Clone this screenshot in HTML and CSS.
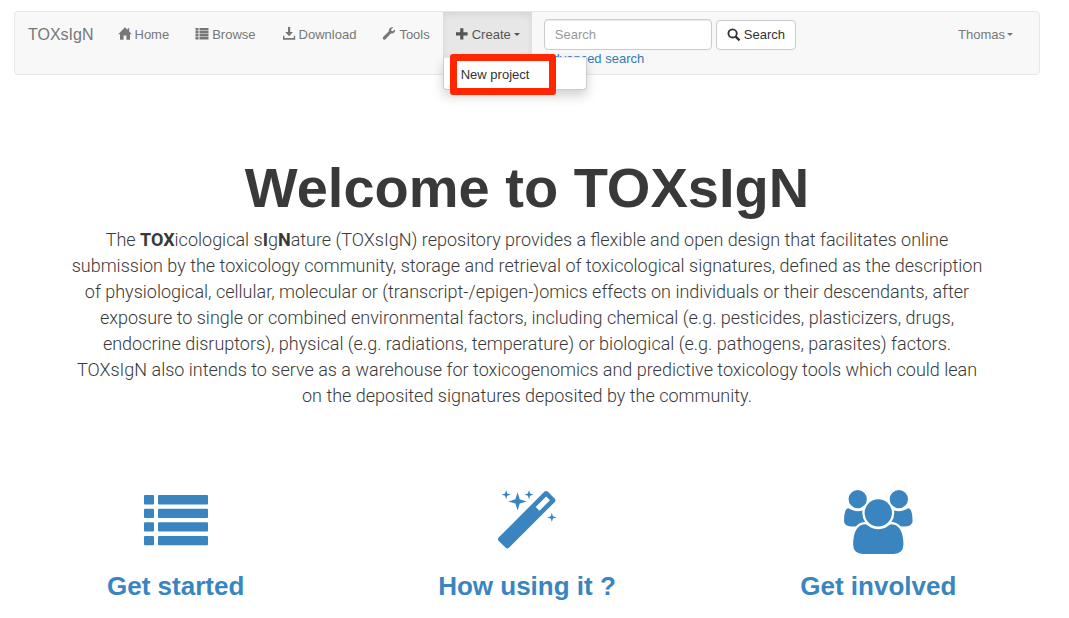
FILE: index.html
```html
<!DOCTYPE html>
<html lang="en">
<head>
<meta charset="utf-8">
<title>TOXsIgN</title>
<link rel="stylesheet" href="styles.css">
</head>
<body>
<header class="navbar">
  <a class="brand" href="#">TOXsIgN</a>
  <nav class="nav">
    <a class="nav-link" href="#"><svg class="icon" viewBox="0 0 14 14"><path d="M7 0.3 0.2 7.2H2V12.8H5.6V8.6H8.4V12.8H12V7.2H13.8L11.2 4.6V1.2H9.6V3Z"/></svg>Home</a>
    <a class="nav-link" href="#"><svg class="icon" viewBox="0 0 14 14"><path d="M0.5 1h3v2.4h-3zM4.5 1h9v2.4h-9zM0.5 4h3v2.4h-3zM4.5 4h9v2.4h-9zM0.5 7h3v2.4h-3zM4.5 7h9v2.4h-9zM0.5 10h3v2.4h-3zM4.5 10h9v2.4h-9z"/></svg>Browse</a>
    <a class="nav-link" href="#"><svg class="icon" viewBox="0 0 14 14"><path d="M6 0H8.2V5H11L7.1 9.2 3.2 5H6ZM1 8.8H2.4V11H11.8V8.8H13.2V12.8H1Z"/></svg>Download</a>
    <a class="nav-link" href="#"><svg class="icon" viewBox="0 0 14 14"><path d="M13 2.4 10.7 4.2 9.3 3.7 9.2 2.2 11.4 0.4C9.2-0.3 6.3 1.2 6.9 4.3L1.3 9.8C-0.2 11.4 1.8 13.8 3.5 12.2L8.9 6.5C11.7 7.1 13.7 4.8 13 2.4Z"/></svg>Tools</a>
    <div class="dropdown">
      <button class="nav-link nav-open" type="button" aria-expanded="true"><svg class="icon" viewBox="0 0 14 14"><path d="M5.2 1.2H8.4V5.2H12.6V8.4H8.4V12.4H5.2V8.4H1V5.2H5.2Z"/></svg>Create<span class="caret"></span></button>
      <div class="menu">
        <a class="menu-item" href="#">New project</a>
        <div class="highlight"></div>
      </div>
    </div>
  </nav>
  <form class="search">
    <div class="search-row">
      <input class="search-input" type="text" placeholder="Search" aria-label="Search">
      <button class="search-button" type="button"><svg class="icon" viewBox="0 0 14 14"><path fill-rule="evenodd" d="M5.6 0.4a5 5 0 0 1 4.2 7.7l3.5 3.5-1.6 1.6-3.6-3.5A5 5 0 1 1 5.6 0.4zm0 1.8a3.2 3.2 0 1 0 0 6.4 3.2 3.2 0 0 0 0-6.4z"/></svg>Search</button>
    </div>
    <a class="advanced" href="#">Advanced search</a>
  </form>
  <a class="nav-link user" href="#">Thomas<span class="caret"></span></a>
</header>
<main>
  <section class="intro">
    <h1>Welcome to TOXsIgN</h1>
    <p>The <b>TOX</b>icological s<b>I</b>g<b>N</b>ature (TOXsIgN) repository provides a flexible and open design that facilitates online<br>
    submission by the toxicology community, storage and retrieval of toxicological signatures, defined as the description<br>
    of physiological, cellular, molecular or (transcript-/epigen-)omics effects on individuals or their descendants, after<br>
    exposure to single or combined environmental factors, including chemical (e.g. pesticides, plasticizers, drugs,<br>
    endocrine disruptors), physical (e.g. radiations, temperature) or biological (e.g. pathogens, parasites) factors.<br>
    TOXsIgN also intends to serve as a warehouse for toxicogenomics and predictive toxicology tools which could lean<br>
    on the deposited signatures deposited by the community.</p>
  </section>
  <section class="features">
    <a class="feature" href="#">
      <svg class="feature-icon" viewBox="0 0 64 64"><g><rect x="0" y="5" width="10" height="9.5" rx="1"/><rect x="14" y="5" width="50" height="9.5" rx="1"/><rect x="0" y="18.8" width="10" height="9.3" rx="1"/><rect x="14" y="18.8" width="50" height="9.3" rx="1"/><rect x="0" y="32.3" width="10" height="9.3" rx="1"/><rect x="14" y="32.3" width="50" height="9.3" rx="1"/><rect x="0" y="46" width="10" height="9.2" rx="1"/><rect x="14" y="46" width="50" height="9.2" rx="1"/></g></svg>
      <h2>Get started</h2>
    </a>
    <a class="feature" href="#">
      <svg class="feature-icon" viewBox="0 0 1664 1792"><path d="M1190 581l293-293-107-107-293 293zm447-293q0 27-18 45l-1286 1286q-18 18-45 18t-45-18l-198-198q-18-18-18-45t18-45l1286-1286q18-18 45-18t45 18l198 198q18 18 18 45zm-1351-190l98 30-98 30-30 98-30-98-98-30 98-30 30-98zm350 162l196 60-196 60-60 196-60-196-196-60 196-60 60-196zm930 478l98 30-98 30-30 98-30-98-98-30 98-30 30-98zm-640-640l98 30-98 30-30 98-30-98-98-30 98-30 30-98z"/></svg>
      <h2>How using it ?</h2>
    </a>
    <a class="feature" href="#">
      <svg class="feature-icon" viewBox="0 -256 1920 1792"><path d="M593 640q-162 5-265 128h-134q-82 0-138-40.5t-56-118.5q0-353 124-353 6 0 43.5 21t97.5 42.5 119 21.5q67 0 133-23-5 37-5 66 0 139 81 256zm1071 637q0 120-73 189.5t-194 69.5h-874q-121 0-194-69.5t-73-189.5q0-53 3.5-103.5t14-109 26.5-108.5 43-97.5 62-81 85.5-53.5 111.5-20q10 0 43 21.5t73 48 107 48 135 21.5 135-21.5 107-48 73-48 43-21.5q61 0 111.5 20t85.5 53.5 62 81 43 97.5 26.5 108.5 14 109 3.5 103.5zm-1024-1277q0 106-75 181t-181 75-181-75-75-181 75-181 181-75 181 75 75 181zm704 384q0 159-112.5 271.5t-271.5 112.5-271.5-112.5-112.5-271.5 112.5-271.5 271.5-112.5 271.5 112.5 112.5 271.5zm576 225q0 78-56 118.5t-138 40.5h-134q-103-123-265-128 81-117 81-256 0-29-5-66 66 23 133 23 59 0 119-21.5t97.5-42.5 43.5-21q124 0 124 353zm-128-609q0 106-75 181t-181 75-181-75-75-181 75-181 181-75 181 75 75 181z"/></svg>
      <h2>Get involved</h2>
    </a>
  </section>
</main>
</body>
</html>
```
FILE: styles.css
```css
* {
  box-sizing: border-box;
}

body {
  margin: 11px 15px 0 0;
  background: #fff;
  color: #393939;
  font: 13px/18px "Liberation Sans", Arial, sans-serif;
}

a {
  color: #337ab7;
  text-decoration: none;
}

button,
input {
  font: inherit;
}

.icon {
  width: 14px;
  height: 14px;
  flex: none;
  fill: currentColor;
}

.navbar {
  display: flex;
  align-items: flex-start;
  min-height: 64px;
  margin: 0 14px;
  border: 1px solid #e7e7e7;
  border-radius: 4px;
  background: #f8f8f8;
}

.brand {
  padding: 0 11px 0 13px;
  color: #777;
  font-size: 16px;
  line-height: 46px;
}

.nav {
  display: flex;
}

.nav-link {
  display: flex;
  align-items: center;
  gap: 3px;
  height: 45px;
  padding: 0 13px;
  border: 0;
  background: none;
  color: #777;
}

.nav-link .icon {
  margin-bottom: 2px;
}

.dropdown {
  position: relative;
}

.nav-open {
  padding: 0 12px;
  background: #e7e7e7;
  color: #555;
  box-shadow: inset 0 3px 6px rgba(0, 0, 0, 0.08);
}

.caret {
  border: 3px solid transparent;
  border-top-color: currentColor;
  border-bottom: 0;
}

.menu {
  position: absolute;
  z-index: 2;
  top: 45px;
  left: 0;
  width: 144px;
  padding: 8px 0 5px;
  border: 1px solid #ccc;
  border-top-color: #e7e7e7;
  border-radius: 0 0 4px 4px;
  background: #fff;
  box-shadow: 0 6px 12px rgba(0, 0, 0, 0.18);
}

.menu-item {
  display: block;
  padding: 0 17px;
  color: #333;
}

.highlight {
  position: absolute;
  inset: -4px 30px -6px 6px;
  border: 7px solid #ff2600;
  border-radius: 3px;
  pointer-events: none;
}

.search {
  padding: 7px 0 0 12px;
}

.search-row {
  display: flex;
  align-items: flex-end;
  gap: 4px;
}

.search-input {
  width: 168px;
  height: 31px;
  padding: 0 10px;
  border: 1px solid #ccc;
  border-radius: 4px;
  background: #fff;
  color: #555;
  box-shadow: inset 0 1px 1px rgba(0, 0, 0, 0.08);
}

.search-input::placeholder {
  color: #999;
}

.search-button {
  display: flex;
  align-items: center;
  gap: 3px;
  height: 30px;
  padding: 0 10px;
  border: 1px solid #ccc;
  border-radius: 4px;
  background: #fff;
  color: #333;
}

.advanced {
  display: block;
}

.user {
  margin-left: auto;
  padding: 0 26px;
  gap: 2px;
}

.intro {
  padding: 82px 14px 0;
  text-align: center;
}

.intro h1 {
  margin: 0 0 8px;
  font-size: 56px;
  line-height: 62px;
}

.intro p {
  margin: 0;
  font: 300 18px/26px Roboto, "Liberation Sans", sans-serif;
  white-space: nowrap;
}

.intro b {
  font-weight: 700;
}

.features {
  display: grid;
  grid-template-columns: repeat(3, 1fr);
  padding-top: 81px;
  text-align: center;
}

.feature {
  color: #3a85c0;
}

.feature-icon {
  display: block;
  height: 64px;
  margin: 0 auto;
  fill: currentColor;
}

.feature h2 {
  margin: 17px 0 0;
  font-size: 26px;
  line-height: 30px;
}
```
